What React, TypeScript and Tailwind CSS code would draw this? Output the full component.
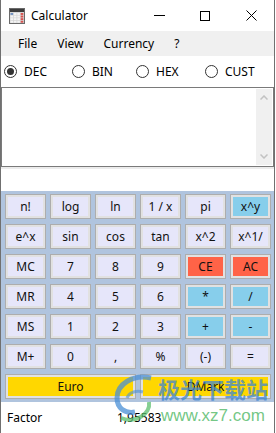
import React from "react";

const F = { fontFamily: '"Noto Sans", "Open Sans", sans-serif' };

type Btn = { t: string; c?: string };

const rows: Btn[][] = [
  [{ t: "n!" }, { t: "log" }, { t: "ln" }, { t: "1 / x" }, { t: "pi" }, { t: "x^y", c: "sky" }],
  [{ t: "e^x" }, { t: "sin" }, { t: "cos" }, { t: "tan" }, { t: "x^2" }, { t: "x^1/" }],
  [{ t: "MC" }, { t: "7" }, { t: "8" }, { t: "9" }, { t: "CE", c: "red" }, { t: "AC", c: "red" }],
  [{ t: "MR" }, { t: "4" }, { t: "5" }, { t: "6" }, { t: "*", c: "sky" }, { t: "/", c: "sky" }],
  [{ t: "MS" }, { t: "1" }, { t: "2" }, { t: "3" }, { t: "+", c: "sky" }, { t: "-", c: "sky" }],
  [{ t: "M+" }, { t: "0" }, { t: "," }, { t: "%" }, { t: "(-)" }, { t: "=" }],
];

function Key({ t, c, span }: { t: string; c?: string; span?: boolean }) {
  const bg =
    c === "red"
      ? "bg-[#ff6347]"
      : c === "sky"
      ? "bg-[#87ceeb]"
      : c === "gold"
      ? "bg-[#ffd700]"
      : "bg-[#e6e6fa]";
  return (
    <div
      className={`${bg} ${span ? "col-span-3" : ""} h-[25px] border border-[#adadad] shadow-[inset_0_0_0_2px_#e1e1e1] flex items-center justify-center overflow-hidden whitespace-nowrap text-[12px] text-[#111]`}
    >
      {t}
    </div>
  );
}

function Radio({ label, on, w }: { label: string; on?: boolean; w: string }) {
  return (
    <div className={`flex items-center ${w}`}>
      <div className="w-[13px] h-[13px] rounded-full border border-[#333] bg-white flex items-center justify-center">
        {on && <div className="w-[7px] h-[7px] rounded-full bg-[#333]" />}
      </div>
      <span className="ml-[7px] text-[12px] text-black">{label}</span>
    </div>
  );
}

export default function App() {
  return (
    <div className="relative w-[275px] h-[433px] overflow-hidden bg-white border-x border-[#707070] flex flex-col" style={F}>
      {/* title bar */}
      <div className="h-[31px] flex items-center bg-white shrink-0">
        <svg width="16" height="16" viewBox="0 0 16 16" className="ml-[8px]">
          <rect x="0.5" y="0.5" width="15" height="15" fill="#d6d6d6" stroke="#6a6a6a" />
          <rect x="1" y="1" width="14" height="3" fill="#3c3c3c" />
          {[0, 1, 2, 3].map((r) =>
            [0, 1, 2, 3].map((c) => (
              <rect
                key={`${r}-${c}`}
                x={1.5 + c * 3.4}
                y={5 + r * 2.6}
                width="2.6"
                height="1.9"
                fill={c === 3 ? "#d9534f" : c === 0 && r === 0 ? "#6f8fbf" : "#f4f4f4"}
              />
            ))
          )}
        </svg>
        <span className="ml-[6px] text-[12px] text-black">Calculator</span>
        <div className="ml-auto flex h-full">
          <div className="w-[46px] flex items-center justify-center">
            <div className="w-[11px] h-px bg-black" />
          </div>
          <div className="w-[46px] flex items-center justify-center">
            <div className="w-[10px] h-[10px] border border-black" />
          </div>
          <div className="w-[46px] flex items-center justify-center">
            <svg width="11" height="11" viewBox="0 0 11 11">
              <path d="M0.5 0.5 L10.5 10.5 M10.5 0.5 L0.5 10.5" stroke="#000" strokeWidth="1" />
            </svg>
          </div>
        </div>
      </div>

      {/* menu bar */}
      <div className="h-[25px] bg-[#f0f0f0] flex items-center pl-[7px] text-[12px] text-black shrink-0">
        <span className="px-[10px]">File</span>
        <span className="px-[10px]">View</span>
        <span className="px-[10px]">Currency</span>
        <span className="px-[10px]">?</span>
      </div>

      {/* radio row */}
      <div className="h-[31px] flex items-center pl-[3px] shrink-0">
        <Radio label="DEC" on w="w-[68px]" />
        <Radio label="BIN" w="w-[64px]" />
        <Radio label="HEX" w="w-[69px]" />
        <Radio label="CUST" w="w-[60px]" />
      </div>

      {/* text area */}
      <div className="h-[80px] border border-[#7a7a7a] bg-white flex p-px shrink-0">
        <div className="flex-1" />
        <div className="w-[16px] bg-[#f0f0f0] flex flex-col items-center justify-between py-[6px]">
          <svg width="8" height="5" viewBox="0 0 8 5">
            <path d="M0.5 4.5 L4 1 L7.5 4.5" stroke="#c2c2c2" strokeWidth="1.5" fill="none" />
          </svg>
          <svg width="8" height="5" viewBox="0 0 8 5">
            <path d="M0.5 0.5 L4 4 L7.5 0.5" stroke="#c2c2c2" strokeWidth="1.5" fill="none" />
          </svg>
        </div>
      </div>
      <div className="h-[24px] border-t-2 border-[#ececec] bg-white shrink-0" />

      {/* keypad */}
      <div className="bg-[#b0c4de] pl-[4px] pt-[3px] pb-[3px] shrink-0">
        <div className="grid grid-cols-[repeat(6,41px)] gap-x-[4px] gap-y-[5px]">
          {rows.flat().map((b, i) => (
            <Key key={i} t={b.t} c={b.c} />
          ))}
          <Key t="Euro" c="gold" span />
          <Key t="DMark" c="gold" span />
        </div>
      </div>

      {/* factor row */}
      <div className="flex-1 flex items-center text-[12px] text-black">
        <span className="ml-[6px] w-[110px]">Factor</span>
        <span>1,95583</span>
      </div>

      {/* watermark */}
      <div className="absolute left-[110px] top-[372px] pointer-events-none">
        <svg width="44" height="54" viewBox="0 0 44 54">
          <path d="M40 6 C22 2 6 12 6 26 C6 36 14 42 24 40" stroke="#4a8fd6" strokeWidth="5" fill="none" opacity="0.75" />
          <path d="M10 46 C24 52 40 42 38 30" stroke="#5cbf6e" strokeWidth="4" fill="none" opacity="0.75" />
          <path d="M16 26 C18 20 26 18 32 20" stroke="#4a8fd6" strokeWidth="3" fill="none" opacity="0.6" />
        </svg>
      </div>
      <div
        className="absolute left-[157px] top-[377px] text-[22px] font-bold leading-none text-[#3f86d4]/75 pointer-events-none whitespace-nowrap"
        style={{ fontFamily: '"Noto Sans CJK SC", sans-serif' }}
      >
        极光下载站
      </div>
      <div
        className="absolute left-[160px] top-[407px] text-[17px] leading-none text-[#4fb865]/80 pointer-events-none whitespace-nowrap"
        style={{ fontFamily: '"Liberation Sans", sans-serif' }}
      >
        www.xz7.com
      </div>
    </div>
  );
}
